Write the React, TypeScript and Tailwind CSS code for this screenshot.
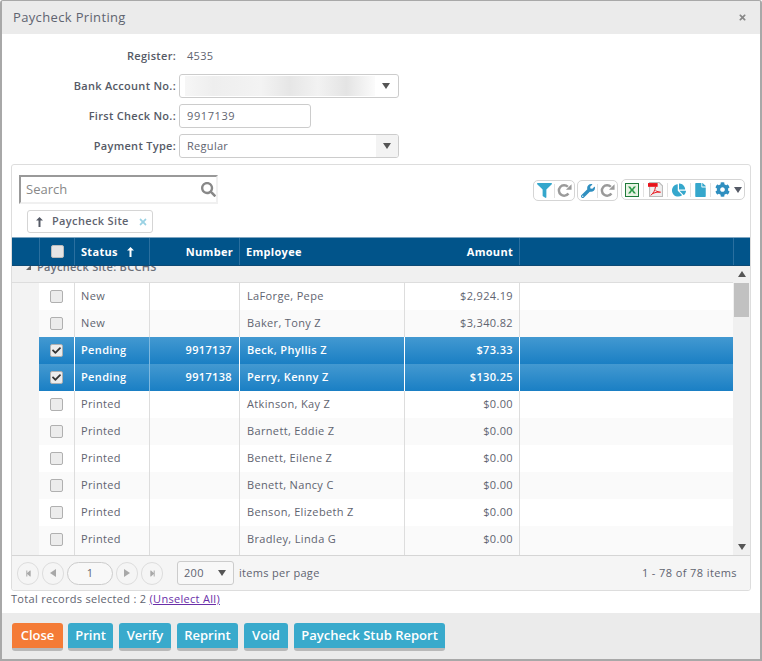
import React from "react";
import { FaFilter, FaWrench, FaChartPie, FaFile, FaCog, FaSearch, FaCheck, FaStepBackward, FaStepForward, FaTimes } from "react-icons/fa";

type Row = { s: string; n: string; e: string; a: string; sel?: boolean };
const rows: Row[] = [
  { s: "New", n: "", e: "LaForge, Pepe", a: "$2,924.19" },
  { s: "New", n: "", e: "Baker, Tony Z", a: "$3,340.82" },
  { s: "Pending", n: "9917137", e: "Beck, Phyllis Z", a: "$73.33", sel: true },
  { s: "Pending", n: "9917138", e: "Perry, Kenny Z", a: "$130.25", sel: true },
  { s: "Printed", n: "", e: "Atkinson, Kay Z", a: "$0.00" },
  { s: "Printed", n: "", e: "Barnett, Eddie Z", a: "$0.00" },
  { s: "Printed", n: "", e: "Benett, Eilene Z", a: "$0.00" },
  { s: "Printed", n: "", e: "Benett, Nancy C", a: "$0.00" },
  { s: "Printed", n: "", e: "Benson, Elizebeth Z", a: "$0.00" },
  { s: "Printed", n: "", e: "Bradley, Linda G", a: "$0.00" },
];

const Caret = ({ className = "" }: { className?: string }) => (
  <svg viewBox="0 0 8 6" className={"w-[8px] h-[6px] " + className}><path d="M0 0h8L4 6z" fill="currentColor" /></svg>
);

const UpArrow = ({ className = "" }: { className?: string }) => (
  <svg viewBox="0 0 7 10" className={"w-[7px] h-[10px] " + className}>
    <path d="M3.500 0 7 3.600H4.500V10h-2V3.600H0z" fill="currentColor" />
  </svg>
);

const Redo = () => (
  <svg viewBox="0 0 16 16" className="w-[15px] h-[15px] text-[#9a9a9a]">
    <path d="M12.2 11.2A5.6 5.6 0 1 1 11.6 4" fill="none" stroke="currentColor" strokeWidth="2.6" />
    <path d="M15.5 1.2v6h-6z" fill="currentColor" />
  </svg>
);

const Sep = () => <span className="w-px h-[14px] bg-[#e2e2e2]" />;

const Box = ({ checked = false, header = false }: { checked?: boolean; header?: boolean }) => (
  <span className={"w-[13px] h-[13px] rounded-[2px] border flex items-center justify-center " + (header ? "border-[#bbbbbb] bg-[#e4e4e4]" : "border-[#b0b0b0] bg-[#ececec]")}>
    {checked && <FaCheck className="w-[9px] h-[9px] text-[#333333]" />}
  </span>
);

const Label = ({ children }: { children: React.ReactNode }) => (
  <div className="w-[174px] text-right font-semibold text-[#555a66] shrink-0">{children}</div>
);

const columns = "grid grid-cols-[27px_35px_75px_90px_165px_115px_1fr]";

const Pg = ({ children }: { children: React.ReactNode }) => (
  <span className="w-[22px] h-[23px] rounded-full border border-[#dddddd] flex items-center justify-center text-[#a8a8a8] shrink-0">{children}</span>
);

const Btn = ({ children, cls }: { children: React.ReactNode; cls: string }) => (
  <button className={"h-[28px] px-[7px] rounded-[3px] text-white font-semibold text-[13px] border-b-[3px] " + cls}>{children}</button>
);

export default function App() {
  return (
    <div className="w-[762px] h-[661px] bg-white border-t border-t-[#a8a8a8] border-l-2 border-l-[#a8a8a8] border-r-2 border-r-[#a8a8a8] border-b-2 border-b-[#a8a8a8] flex flex-col text-[12px] text-[#5f6470] overflow-hidden rounded-t-[3px] font-['Open_Sans',sans-serif]">
      <div className="h-[33px] shrink-0 bg-[#ebebeb] flex items-center justify-between pl-[11px] pr-[13px]">
        <span className="text-[13px] tracking-[0.35px] text-[#5f6470]">Paycheck Printing</span>
        <FaTimes className="w-[9px] h-[9px] text-[#888888]" />
      </div>

      <div className="flex flex-col gap-[6px] pt-[10px] text-[11px] tracking-[0.3px]">
        <div className="h-[24px] flex items-center">
          <Label>Register:</Label>
          <span className="ml-[11px]">4535</span>
        </div>
        <div className="h-[24px] flex items-center">
          <Label>Bank Account No.:</Label>
          <div className="ml-[3px] w-[220px] h-[24px] border border-[#cccccc] rounded-[3px] flex items-center pl-[5px] pr-[8px] justify-between">
            <div className="w-[190px] h-[20px] bg-[linear-gradient(90deg,#f6f6f6,#eeeeee_15%,#f3f3f3_40%,#e6e6e6_55%,#f2f2f2_70%,#e4e4e4_85%,#fbfbfb)]" />
            <Caret className="text-[#555555]" />
          </div>
        </div>
        <div className="h-[24px] flex items-center">
          <Label>First Check No.:</Label>
          <div className="ml-[3px] w-[132px] h-[24px] border border-[#cccccc] rounded-[3px] flex items-center pl-[7px] tracking-[0.6px]">9917139</div>
        </div>
        <div className="h-[24px] flex items-center">
          <Label>Payment Type:</Label>
          <div className="ml-[3px] w-[220px] h-[24px] border border-[#cccccc] rounded-[3px] flex items-center justify-between overflow-hidden">
            <span className="pl-[7px]">Regular</span>
            <span className="w-[22px] h-full bg-[#f3f3f3] flex items-center justify-center"><Caret className="text-[#555555]" /></span>
          </div>
        </div>
      </div>

      <div className="ml-[9px] mt-[6px] w-[740px] h-[427px] border border-[#dddddd] rounded-[3px] flex flex-col shrink-0">
        <div className="h-[72px] shrink-0 pt-[10px] pl-[7px] pr-[5px]">
          <div className="flex justify-between items-start">
            <div className="w-[199px] h-[29px] border-2 border-t-[#999999] border-l-[#999999] border-r-[#f0f0f0] border-b-[#f0f0f0] flex items-center justify-between pl-[5px] pr-0 text-[13px] text-[#888888]">
              <span>Search</span>
              <FaSearch className="w-[15px] h-[15px] text-[#888888]" />
            </div>
            <div className="flex items-start gap-[2px]">
              <div className="mt-[5px] h-[21px] w-[42px] border border-[#d5d5d5] rounded-[5px] flex items-center justify-center gap-[2px]">
                <FaFilter className="w-[15px] h-[15px] text-[#35a7cc]" /><Sep /><Redo />
              </div>
              <div className="mt-[5px] h-[21px] w-[41px] border border-[#d5d5d5] rounded-[5px] flex items-center justify-center gap-[2px]">
                <FaWrench className="w-[14px] h-[14px] text-[#2f8fc0]" /><Sep /><Redo />
              </div>
              <div className="mt-[4px] ml-px h-[21px] w-[124px] border border-[#d5d5d5] rounded-[5px] flex items-center justify-between pl-[3px] pr-[2px]">
                <svg viewBox="0 0 14 14" className="w-[14px] h-[14px]">
                  <rect x="0.5" y="0.5" width="13" height="13" fill="#e8f3e4" stroke="#1f7a3a" />
                  <path d="M3 3.500h2.200L7 6l1.800-2.500H11L8.200 7l2.800 3.500H8.800L7 8l-1.800 2.500H3L5.800 7z" fill="#2e9a4a" />
                </svg>
                <Sep />
                <svg viewBox="0 0 14 14" className="w-[15px] h-[15px]">
                  <path d="M1.500 0.500h9l3 3v10h-12z" fill="#efefef" stroke="#bbbbbb" />
                  <rect x="0" y="1" width="9" height="3.500" fill="#e8121a" />
                  <path d="M7 4.500C6.500 8 5 10.500 2.500 12.500M7 8c1.500 1 3.500 1.500 5 1.500M4 11c2-1 5-2 7-1.500" fill="none" stroke="#e8121a" strokeWidth="0.9" />
                </svg>
                <Sep />
                <FaChartPie className="w-[14px] h-[14px] text-[#35a7cc]" />
                <Sep />
                <FaFile className="w-[11px] h-[14px] text-[#35a7cc]" />
                <Sep />
                <FaCog className="w-[15px] h-[15px] text-[#2f8fc0]" />
                <Caret className="text-[#555a66]" />
              </div>
            </div>
          </div>
          <div className="mt-[6px] ml-[8px] w-[126px] h-[23px] border border-[#d5d5d5] rounded-[3px] flex items-center pl-[8px] text-[11px] font-semibold tracking-[0.35px]">
            <UpArrow className="mr-[9px] text-[#555a66]" />
            <span>Paycheck Site</span>
            <FaTimes className="ml-[9px] w-[10px] h-[10px] text-[#9ad2e4]" />
          </div>
        </div>

        <div className={columns + " h-[29px] shrink-0 bg-[#01548a] border-t border-t-[#7fa6c2] border-b border-b-[#0d4a75] text-white font-bold text-[11px] tracking-[0.3px]"}>
          <div />
          <div className="border-l border-[#2a6f9f] flex items-center justify-center"><Box header /></div>
          <div className="border-l border-[#2a6f9f] flex items-center pl-[6px] pt-px">Status <UpArrow className="ml-[9px] text-white" /></div>
          <div className="border-l border-[#2a6f9f] flex items-center justify-end pr-[6px] pt-px">Number</div>
          <div className="border-l border-[#2a6f9f] flex items-center pl-[6px] pt-px">Employee</div>
          <div className="flex items-center justify-end pr-[6px] pt-px">Amount</div>
          <div className="border-l border-[#2a6f9f] flex justify-end"><span className="w-[17px] border-l border-[#2a6f9f]" /></div>
        </div>

        <div className="flex flex-1 min-h-0">
          <div className="flex-1 min-w-0 overflow-hidden flex flex-col">
            <div className="h-[17px] shrink-0 bg-[#f0f0f0] flex items-center overflow-hidden text-[11px] font-semibold tracking-[0.3px] text-[#6a6e78] border-b border-b-[#dddddd]">
              <span className="-mt-[13px] flex items-center">
                <span className="ml-[14px] mr-[6px] w-0 h-0 border-l-[5px] border-l-transparent border-b-[5px] border-b-[#666666]" />
                Paycheck Site: BCCHS
              </span>
            </div>
            {rows.map((r, i) => (
              <div key={i} className="grid grid-cols-[27px_35px_75px_90px_165px_115px_1fr] h-[27px] shrink-0 text-[11px] tracking-[0.35px]">
                <div className="bg-[#f3f3f3]" />
                {r.sel ? (
                  <>
                    <div className="bg-[linear-gradient(#4399d1,#1a7fc4)] flex items-center justify-center"><Box checked /></div>
                    <div className="bg-[linear-gradient(#4399d1,#1a7fc4)] border-l border-white flex items-center pl-[6px] text-white font-semibold">{r.s}</div>
                    <div className="bg-[linear-gradient(#4399d1,#1a7fc4)] border-l border-[#7db8df] flex items-center justify-end pr-[7px] text-white font-semibold">{r.n}</div>
                    <div className="bg-[linear-gradient(#4399d1,#1a7fc4)] border-l border-white flex items-center pl-[7px] text-white font-semibold">{r.e}</div>
                    <div className="bg-[linear-gradient(#4399d1,#1a7fc4)] border-l border-white flex items-center justify-end pr-[6px] text-white font-semibold">{r.a}</div>
                    <div className="bg-[linear-gradient(#4399d1,#1a7fc4)] border-l border-white" />
                  </>
                ) : (
                  <>
                    <div className={"flex items-center justify-center " + (i % 2 ? "bg-[#fafafa]" : "bg-white")}><Box /></div>
                    <div className={"border-l border-[#dddddd] flex items-center pl-[6px] " + (i % 2 ? "bg-[#fafafa]" : "bg-white")}>{r.s}</div>
                    <div className={"border-l border-[#dddddd] flex items-center justify-end pr-[7px] " + (i % 2 ? "bg-[#fafafa]" : "bg-white")}>{r.n}</div>
                    <div className={"border-l border-[#dddddd] flex items-center pl-[7px] " + (i % 2 ? "bg-[#fafafa]" : "bg-white")}>{r.e}</div>
                    <div className={"border-l border-[#dddddd] flex items-center justify-end pr-[6px] " + (i % 2 ? "bg-[#fafafa]" : "bg-white")}>{r.a}</div>
                    <div className={"border-l border-[#dddddd] " + (i % 2 ? "bg-[#fafafa]" : "bg-white")} />
                  </>
                )}
              </div>
            ))}
            <div className="grid grid-cols-[27px_35px_75px_90px_165px_115px_1fr] flex-1">
              <div className="bg-[#f3f3f3]" />
              <div className="bg-[#fafafa]" />
              <div className="bg-[#fafafa] border-l border-[#dddddd]" />
              <div className="bg-[#fafafa] border-l border-[#dddddd]" />
              <div className="bg-[#fafafa] border-l border-[#dddddd]" />
              <div className="bg-[#fafafa] border-l border-[#dddddd]" />
              <div className="bg-[#fafafa] border-l border-[#dddddd]" />
            </div>
          </div>
          <div className="w-[17px] shrink-0 bg-[#f0f0f0] flex flex-col items-center pt-[5px] pb-[5px]">
            <Caret className="rotate-180 text-[#555555]" />
            <div className="w-[15px] h-[34px] bg-[#c1c1c1] mt-[6px]" />
            <div className="flex-1" />
            <Caret className="text-[#555555]" />
          </div>
        </div>

        <div className="h-[35px] shrink-0 bg-[#f5f5f5] border-t border-t-[#d5d5d5] flex items-center pl-[5px] pr-[13px] text-[11px] tracking-[0.3px] rounded-b-[3px]">
          <div className="flex items-center gap-[3px]">
            <Pg><FaStepBackward className="w-[7px] h-[7px]" /></Pg>
            <Pg><Caret className="rotate-90" /></Pg>
            <span className="w-[46px] h-[23px] rounded-full border border-[#cccccc] bg-[#f8f8f8] flex items-center justify-center">1</span>
            <Pg><Caret className="-rotate-90" /></Pg>
            <Pg><FaStepForward className="w-[7px] h-[7px]" /></Pg>
          </div>
          <div className="ml-[14px] w-[57px] h-[24px] border border-[#cccccc] rounded-[3px] flex items-center justify-between pl-[6px] pr-[7px] bg-[#f8f8f8]">
            <span>200</span><Caret className="text-[#555555]" />
          </div>
          <span className="ml-[5px]">items per page</span>
          <span className="ml-auto tracking-[0.4px]">1 - 78 of 78 items</span>
        </div>
      </div>

      <div className="ml-[9px] h-[22px] shrink-0 flex items-start text-[11px] tracking-[0.3px]">
        <span>Total records selected : 2 <a className="text-[#6a2fa8] underline">(Unselect All)</a></span>
      </div>

      <div className="flex-1 bg-[#ebebeb] flex items-start gap-[6px] pt-[10px] pl-[10px]">
        <Btn cls="w-[51px] bg-[#f47b36] border-b-[#b9b9b9]">Close</Btn>
        <Btn cls="-ml-px w-[45px] bg-[#39aacc] border-b-[#b9b9b9]">Print</Btn>
        <Btn cls="w-[52px] bg-[#39aacc] border-b-[#b9b9b9]">Verify</Btn>
        <Btn cls="w-[61px] bg-[#39aacc] border-b-[#b9b9b9]">Reprint</Btn>
        <Btn cls="w-[44px] bg-[#39aacc] border-b-[#b9b9b9]">Void</Btn>
        <Btn cls="w-[151px] bg-[#39aacc] border-b-[#b9b9b9]">Paycheck Stub Report</Btn>
      </div>
    </div>
  );
}
